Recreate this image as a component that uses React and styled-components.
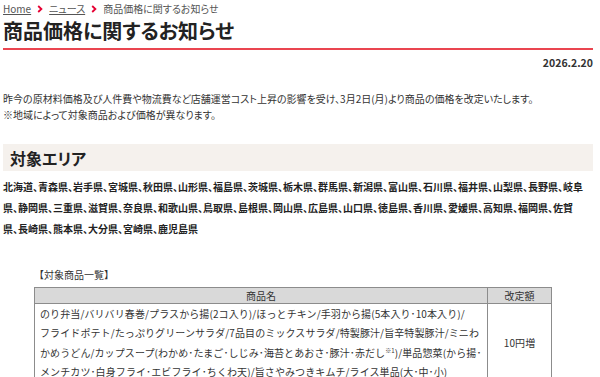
import React from "react";
import styled, { createGlobalStyle } from "styled-components";

const Global = createGlobalStyle`
  html, body { margin: 0; padding: 0; background: #fff; }
  body {
    font-family: "Noto Sans CJK JP", "Noto Sans", sans-serif;
    color: #333;
    font-feature-settings: "palt";
  }
`;

const Page = styled.div`
  padding: 0 7px 0 3px;
`;

const Crumbs = styled.nav`
  display: flex;
  align-items: center;
  gap: 6px;
  height: 17px;
  font-size: 10px;
  color: #555;
`;

const CrumbLink = styled.a`
  color: #555;
  text-decoration: underline;
  text-underline-offset: 1px;
`;

const Chevron = () => (
  <svg width="6" height="8" viewBox="0 0 6 8">
    <path d="M1.2 1 L4.4 4 L1.2 7" fill="none" stroke="#e60033" strokeWidth="1.8" />
  </svg>
);

const Title = styled.h1`
  margin: 0;
  font-size: 20px;
  line-height: 28px;
  font-weight: 700;
  color: #222;
  padding-bottom: 3px;
  border-bottom: 2px solid #ea4550;
`;

const DateLine = styled.div`
  margin-top: 5px;
  text-align: right;
  font-size: 10.5px;
  font-weight: 700;
  line-height: 16px;
  color: #333;
`;

const Para = styled.p`
  margin: 20px 0 0;
  font-size: 10px;
  line-height: 16px;
  color: #333;
`;

const SectionHead = styled.h2`
  margin: 21px 0 0;
  height: 27px;
  display: flex;
  align-items: center;
  padding-left: 7px;
  background: #f5f1ed;
  font-size: 16px;
  font-weight: 700;
  color: #222;
`;

const Areas = styled.div`
  margin-top: 5px;
  font-size: 10px;
  font-weight: 700;
  line-height: 21px;
  color: #222;
`;

const Line = styled.div`
  white-space: nowrap;
`;

const ListBlock = styled.div`
  margin: 29px 0 0 31px;
  width: 517px;
`;

const Caption = styled.div`
  font-size: 10px;
  line-height: 14px;
  color: #333;
  margin-bottom: 5px;
  font-feature-settings: normal;
`;

const Table = styled.table`
  width: 100%;
  table-layout: fixed;
  border-collapse: collapse;
  font-size: 10px;
  color: #333;
  font-feature-settings: normal;
`;

const Th = styled.th`
  background: #d9d9d9;
  border: 1px solid #8c8c8c;
  height: 15px;
  padding: 0;
  font-weight: 400;
  text-align: center;
  white-space: nowrap;
`;

const Td = styled.td`
  border: 1px solid #8c8c8c;
  padding: 0 5px;
  line-height: 19.4px;
  text-align: ${(p) => (p.$center ? "center" : "left")};
  vertical-align: middle;
  letter-spacing: 0.1px;
  overflow: hidden;
`;

const areaLines = [
  "北海道、青森県、岩手県、宮城県、秋田県、山形県、福島県、茨城県、栃木県、群馬県、新潟県、富山県、石川県、福井県、山梨県、長野県、岐阜",
  "県、静岡県、三重県、滋賀県、奈良県、和歌山県、鳥取県、島根県、岡山県、広島県、山口県、徳島県、香川県、愛媛県、高知県、福岡県、佐賀",
  "県、長崎県、熊本県、大分県、宮崎県、鹿児島県",
];

const Sup = styled.sup`
  font-size: 6px;
  line-height: 0;
`;

const productLines = [
  "のり弁当/バリバリ春巻/プラスから揚(2コ入り)/ほっとチキン/手羽から揚(5本入り･10本入り)/",
  "フライドポテト/たっぷりグリーンサラダ/7品目のミックスサラダ/特製豚汁/旨辛特製豚汁/ミニわ",
  <>かめうどん/カップスープ(わかめ･たまご･しじみ･海苔とあおさ･豚汁･赤だし<Sup>※1</Sup>)/単品惣菜(から揚･</>,
  "メンチカツ･白身フライ･エビフライ･ちくわ天)/旨さやみつきキムチ/ライス単品(大･中･小)",
];

export default function App() {
  return (
    <>
      <Global />
      <Page>
        <Crumbs>
          <CrumbLink>Home</CrumbLink>
          <Chevron />
          <CrumbLink>ニュース</CrumbLink>
          <Chevron />
          <span>商品価格に関するお知らせ</span>
        </Crumbs>
        <Title>商品価格に関するお知らせ</Title>
        <DateLine>2026.2.20</DateLine>
        <Para>
          昨今の原材料価格及び人件費や物流費など店舗運営コスト上昇の影響を受け、3月2日(月)より商品の価格を改定いたします。
          <br />
          ※地域によって対象商品および価格が異なります。
        </Para>
        <SectionHead>対象エリア</SectionHead>
        <Areas>
          {areaLines.map((l, i) => (
            <Line key={i}>{l}</Line>
          ))}
        </Areas>
        <ListBlock>
          <Caption>【対象商品一覧】</Caption>
          <Table>
            <colgroup>
              <col style={{ width: "453px" }} />
              <col style={{ width: "64px" }} />
            </colgroup>
            <thead>
              <tr>
                <Th>商品名</Th>
                <Th>改定額</Th>
              </tr>
            </thead>
            <tbody>
              <tr>
                <Td>
                  {productLines.map((l, i) => (
                    <Line key={i}>{l}</Line>
                  ))}
                </Td>
                <Td $center>10円増</Td>
              </tr>
            </tbody>
          </Table>
        </ListBlock>
      </Page>
    </>
  );
}
